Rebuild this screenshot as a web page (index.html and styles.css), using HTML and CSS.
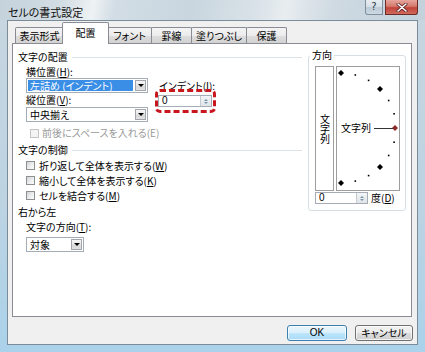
FILE: index.html
```html
<!DOCTYPE html>
<html lang="ja">
<head>
<meta charset="utf-8">
<title>セルの書式設定</title>
<link rel="stylesheet" href="styles.css">
</head>
<body>
<div class="window">
  <div class="titlebar">
    <span class="title">セルの書式設定</span>
    <div class="caption">
      <span class="cap-help">?</span>
      <span class="cap-close">
        <svg width="12" height="9" viewBox="0 0 12 9"><path d="M2 1L10 8M10 1L2 8" stroke="#5a1d1d" stroke-width="3" stroke-linecap="round"/><path d="M2 1L10 8M10 1L2 8" stroke="#fff" stroke-width="1.6" stroke-linecap="round"/></svg>
      </span>
    </div>
  </div>
  <div class="client">
    <div class="tabs">
      <span class="tab t1">表示形式</span>
      <span class="tab t2 active">配置</span>
      <span class="tab t3">フォント</span>
      <span class="tab t4">罫線</span>
      <span class="tab t5">塗りつぶし</span>
      <span class="tab t6">保護</span>
    </div>
    <div class="panel">
      <div class="left">
        <div class="section"><span>文字の配置</span><i class="rule"></i></div>
        <div class="align-grid">
          <div class="lbl">横位置(<u>H</u>):</div>
          <div></div>
          <div class="combo sel"><span class="val">左詰め (インデント)</span><span class="drop"></span></div>
          <div class="lbl indent-lbl">インデント(<u>I</u>):</div>
          <div class="lbl">縦位置(<u>V</u>):</div>
          <div class="spin-wrap">
            <div class="spin"><span class="num">0</span><span class="spinbtn"><i class="up"></i><i class="dn"></i></span></div>
            <span class="mark"></span>
          </div>
          <div class="combo"><span class="val">中央揃え</span><span class="drop"></span></div>
          <div></div>
        </div>
        <div class="check disabled"><span class="box"></span><span>前後にスペースを入れる(E)</span></div>
        <div class="section sec2"><span>文字の制御</span><i class="rule"></i></div>
        <div class="checks">
          <div class="check"><span class="box"></span><span>折り返して全体を表示する(<u>W</u>)</span></div>
          <div class="check"><span class="box"></span><span>縮小して全体を表示する(<u>K</u>)</span></div>
          <div class="check"><span class="box"></span><span>セルを結合する(<u>M</u>)</span></div>
        </div>
        <div class="section sec3"><span>右から左</span></div>
        <div class="dir-lbl">文字の方向(<u>T</u>):</div>
        <div class="combo small"><span class="val">対象</span><span class="drop"></span></div>
      </div>
      <fieldset class="orient">
        <legend>方向</legend>
        <div class="orient-boxes">
          <div class="vbox"><span class="vtext">文字列</span></div>
          <div class="dial">
            <svg width="62" height="123" viewBox="0 0 62 123">
              <g fill="#000">
                <rect x="17.5" y="7.2" width="1.6" height="1.6"/>
                <rect x="30.8" y="12.6" width="1.6" height="1.6"/>
                <rect x="50.9" y="32.7" width="1.6" height="1.6"/>
                <rect x="56.3" y="46" width="1.6" height="1.6"/>
                <rect x="56.3" y="74.4" width="1.6" height="1.6"/>
                <rect x="50.9" y="87.7" width="1.6" height="1.6"/>
                <rect x="30.8" y="107.8" width="1.6" height="1.6"/>
                <rect x="17.5" y="113.3" width="1.6" height="1.6"/>
                <path d="M4 3L7 6L4 9L1 6Z"/>
                <path d="M43 19L46 22L43 25L40 22Z"/>
                <path d="M43 97L46 100L43 103L40 100Z"/>
                <path d="M4 113L7 116L4 119L1 116Z"/>
              </g>
              <path d="M58 58L61 61L58 64L55 61Z" fill="#8e2a2a"/>
              <line x1="37" y1="61.5" x2="56" y2="61.5" stroke="#333" stroke-width="1"/>
              <text x="4" y="65" class="dial-text">文字列</text>
            </svg>
          </div>
        </div>
        <div class="deg-row">
          <div class="spin deg"><span class="num">0</span><span class="spinbtn"><i class="up"></i><i class="dn"></i></span></div>
          <span class="deg-lbl">度(<u>D</u>)</span>
        </div>
      </fieldset>
    </div>
    <div class="buttons">
      <span class="btn ok">OK</span>
      <span class="btn cancel">キャンセル</span>
    </div>
  </div>
</div>
</body>
</html>
```

FILE: styles.css
```css
* { box-sizing: border-box; margin: 0; padding: 0; }
html, body { width: 425px; height: 352px; overflow: hidden; }
body {
  font-family: "Noto Sans CJK JP", "Noto Sans", sans-serif;
  font-size: 10px;
  line-height: 12px;
  color: #000;
  font-feature-settings: "palt";
  background: #bcd4e4;
}
u { text-decoration: underline; text-underline-offset: 1px; }

.window {
  width: 425px;
  height: 352px;
  display: flex;
  flex-direction: column;
  background: linear-gradient(180deg, #c8d6e0 0%, #bcd3e3 60%, #aad2ea 100%);
}

.titlebar {
  height: 20px;
  display: flex;
  justify-content: space-between;
  align-items: flex-start;
  padding-left: 8px;
  background: linear-gradient(100deg, #c4d2dc 0%, #d3dde4 15%, #eef2f4 22%, #d2dde5 27%, #c9d6df 45%, #d9e2e8 60%, #e8edf0 67%, #cfdae2 78%, #c2d1dc 100%);
}
.title { font-size: 11px; line-height: 12px; margin-top: 6px; color: #111; }
.caption { display: flex; gap: 2px; margin-right: 7px; }
.cap-help {
  width: 18px; height: 15px;
  border: 1px solid #7d8e9c; border-top: none;
  border-radius: 0 0 0 3px;
  background: linear-gradient(180deg, #e8eef2 0%, #d5dfe6 50%, #bccbd6 51%, #cdd9e2 100%);
  font-family: "DejaVu Sans", sans-serif;
  font-size: 10px; line-height: 13px; text-align: center; color: #2a3a48;
}
.cap-close {
  width: 33px; height: 15px;
  border: 1px solid #6b2b26; border-top: none;
  border-radius: 0 0 3px 0;
  background: linear-gradient(180deg, #e7a59b 0%, #d47a6d 45%, #c1443a 55%, #d0695c 100%);
  display: flex; align-items: center; justify-content: center;
}

.client {
  flex: 1;
  margin: 0 7px 7px 7px;
  background: #f0f0f0;
  border: 1px solid #7a8b99;
  display: flex;
  flex-direction: column;
}

.tabs {
  height: 22px;
  display: flex;
  align-items: flex-end;
  padding-left: 7px;
}
.tab {
  height: 16px;
  border: 1px solid #898c95;
  border-bottom: none;
  border-radius: 2px 2px 0 0;
  margin-left: -1px;
  background: linear-gradient(180deg, #f4f4f4 0%, #ececec 50%, #dedede 51%, #d2d2d2 100%);
  text-align: center;
  line-height: 15px;
  font-size: 10px;
  white-space: nowrap;
}
.t1 { width: 49px; margin-left: 0; }
.t2 { width: 47px; }
.t3 { width: 45px; }
.t4 { width: 41px; }
.t5 { width: 56px; }
.t6 { width: 41px; }
.tab.active {
  height: 22px;
  margin-bottom: -1px;
  margin-left: -2px;
  margin-right: -1px;
  background: #fff;
  position: relative;
  z-index: 2;
  line-height: 19px;
}

.panel {
  height: 274px;
  margin: 0 5px 0 4px;
  border: 1px solid #898c95;
  background: #fff;
  display: flex;
  align-items: flex-start;
  padding: 7px 5px 0 5px;
}

.left { width: 284px; display: flex; flex-direction: column; align-items: stretch; }

.section { display: flex; align-items: center; height: 12px; gap: 4px; white-space: nowrap; }
.rule { flex: 1; height: 1px; background: #dde2e6; }
.sec2 { margin-top: 5px; }
.sec3 { margin-top: 3px; }

.align-grid {
  display: grid;
  grid-template-columns: 122px 54px;
  grid-template-rows: 13px 15px 14px 15px;
  column-gap: 10px;
  margin: 2px 0 0 8px;
}
.lbl { line-height: 12px; align-self: center; white-space: nowrap; }
.indent-lbl { margin-left: 1px; }

.combo {
  display: flex;
  height: 15px;
  border: 1px solid #a5acb5;
  background: #fff;
}
.combo .val { flex: 1; margin: 1px; padding-left: 2px; line-height: 11px; white-space: nowrap; }
.combo.sel .val { background: #3a8ee6; color: #fff; }
.drop {
  width: 11px;
  margin: 1px;
  border: 1px solid #a3a7ad;
  background: linear-gradient(180deg, #f6f6f6 0%, #e6e6e6 50%, #d6d6d6 51%, #e2e2e2 100%);
  display: flex; align-items: center; justify-content: center;
}
.drop::after {
  content: "";
  border-left: 3px solid transparent;
  border-right: 3px solid transparent;
  border-top: 3px solid #000;
}
.combo.small { width: 58px; margin: 4px 0 0 8px; }

.spin-wrap { position: relative; align-self: end; }
.spin {
  display: flex;
  height: 12px;
  border: 1px solid #a5acb5;
  background: #fff;
}
.spin .num { flex: 1; padding-left: 3px; line-height: 10px; font-family: "Liberation Sans", sans-serif; font-size: 10px; }
.spinbtn {
  width: 11px;
  border-left: 1px solid #c5cbd1;
  background: linear-gradient(180deg, #f3f5f7, #dfe4e8);
  display: flex; flex-direction: column; align-items: center; justify-content: center; gap: 1px;
}
.spinbtn .up { border-left: 2px solid transparent; border-right: 2px solid transparent; border-bottom: 2px solid #7b95ab; }
.spinbtn .dn { border-left: 2px solid transparent; border-right: 2px solid transparent; border-top: 2px solid #7b95ab; }
.mark {
  position: absolute;
  left: -3px; top: -6px; right: -4px; bottom: -6px;
  border: 3px dashed #c8161e;
  border-radius: 5px;
}

.check { display: flex; align-items: center; height: 15px; padding-left: 8px; gap: 4px; white-space: nowrap; }
.box {
  width: 9px; height: 9px;
  border: 1px solid #8e8f8f;
  background: linear-gradient(135deg, #d2d4d6 0%, #eef0f2 60%, #fbfbfb 100%);
}
.check.disabled { height: 12px; margin-top: 5px; padding-left: 12px; gap: 3px; color: #9a9a9a; }
.check.disabled .box { border-color: #c4c4c4; background: #f4f4f4; }
.checks { margin-top: 2px; }

.dir-lbl { margin: 3px 0 0 8px; line-height: 12px; white-space: nowrap; }

.orient {
  width: 98px;
  margin: -2px 0 0 6px;
  border: 1px solid #d5dfe5;
  border-radius: 3px;
  padding: 5px 5px 6px 6px;
}
.orient legend { margin-left: -5px; padding: 0 2px; line-height: 12px; }
.orient-boxes { display: flex; gap: 2px; height: 125px; }
.vbox {
  width: 19px;
  border: 1px solid #9d9d9d;
  display: flex; align-items: center; justify-content: center;
}
.vtext {
  writing-mode: vertical-rl;
  text-orientation: upright;
  line-height: 12px;
  font-feature-settings: normal;
}
.dial { width: 64px; border: 1px solid #9d9d9d; }
.dial svg { display: block; }
.dial-text { font-family: "Noto Sans CJK JP", sans-serif; font-size: 10px; }

.deg-row { display: flex; align-items: center; margin-top: 1px; gap: 3px; }
.spin.deg { width: 53px; }
.deg-lbl { line-height: 12px; }

.buttons {
  display: flex;
  justify-content: flex-end;
  gap: 8px;
  padding-right: 4px;
  margin-top: 8px;
}
.btn {
  height: 16px;
  border-radius: 3px;
  text-align: center;
  line-height: 14px;
  font-size: 10px;
  box-shadow: inset 0 0 0 1px rgba(255,255,255,0.7);
}
.ok {
  width: 60px;
  border: 1px solid #3c7fb1;
  background: linear-gradient(180deg, #eaf6fd 0%, #d9f0fc 50%, #bee6fd 51%, #a7d9f5 100%);
  font-family: "Liberation Sans", sans-serif;
}
.cancel {
  width: 58px;
  border: 1px solid #707070;
  background: linear-gradient(180deg, #f2f2f2 0%, #ebebeb 50%, #dddddd 51%, #cfcfcf 100%);
}
```
